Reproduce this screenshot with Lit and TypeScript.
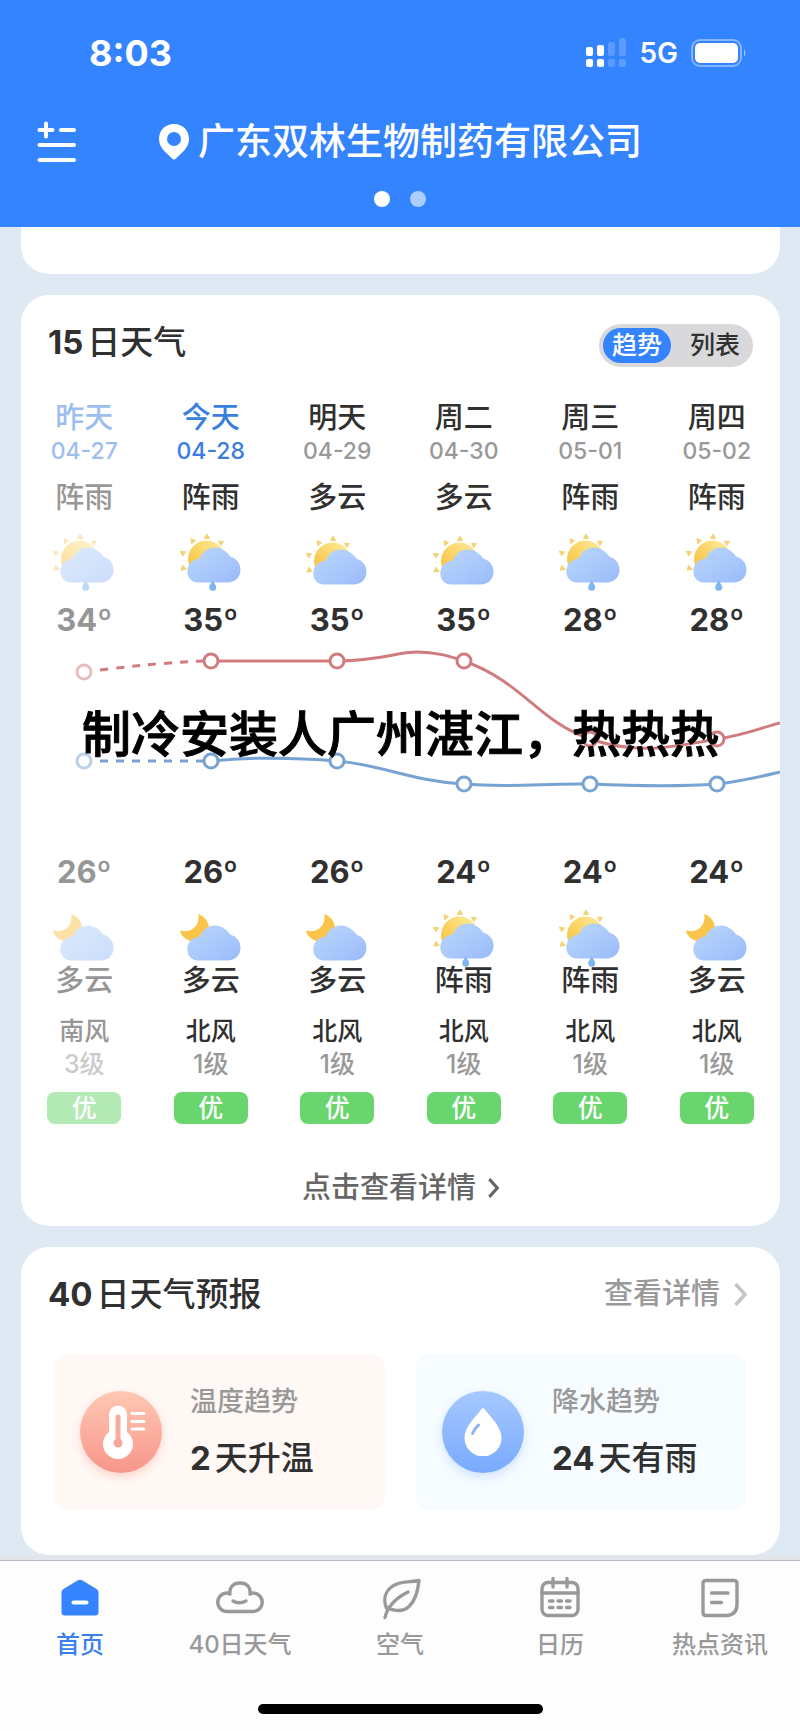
import { LitElement, html, svg, css, nothing } from "lit";
import { customElement, property, state } from "lit/decorators.js";
import { classMap } from "lit/directives/class-map.js";

type Sky = "shower" | "cloudy" | "night-cloudy";

interface Day {
  name: string;
  date: string;
  sky: string;
  icon: Sky;
  high: number;
  low: number;
  nightSky: string;
  nightIcon: Sky;
  wind: string;
  level: number;
  air: string;
  tone?: "past" | "today";
}

const DAYS: Day[] = [
  { name: "昨天", date: "04-27", sky: "阵雨", icon: "shower", high: 34, low: 26, nightSky: "多云", nightIcon: "night-cloudy", wind: "南风", level: 3, air: "优", tone: "past" },
  { name: "今天", date: "04-28", sky: "阵雨", icon: "shower", high: 35, low: 26, nightSky: "多云", nightIcon: "night-cloudy", wind: "北风", level: 1, air: "优", tone: "today" },
  { name: "明天", date: "04-29", sky: "多云", icon: "cloudy", high: 35, low: 26, nightSky: "多云", nightIcon: "night-cloudy", wind: "北风", level: 1, air: "优" },
  { name: "周二", date: "04-30", sky: "多云", icon: "cloudy", high: 35, low: 24, nightSky: "阵雨", nightIcon: "shower", wind: "北风", level: 1, air: "优" },
  { name: "周三", date: "05-01", sky: "阵雨", icon: "shower", high: 28, low: 24, nightSky: "阵雨", nightIcon: "shower", wind: "北风", level: 1, air: "优" },
  { name: "周四", date: "05-02", sky: "阵雨", icon: "shower", high: 28, low: 24, nightSky: "多云", nightIcon: "night-cloudy", wind: "北风", level: 1, air: "优" },
];

@customElement("sky-icon")
export class SkyIcon extends LitElement {
  @property() kind: Sky = "cloudy";

  static styles = css`
    :host { display: block; width: 66px; height: 54px; }
    .art { display: block; width: 66px; height: 54px; overflow: visible; }
  `;

  render() {
    const rain = this.kind === "shower";
    const night = this.kind === "night-cloudy";
    return html`
      <svg class="art" viewBox="0 0 66 54" aria-hidden="true">
        <defs>
          <linearGradient id="sun" x1="0" y1="1" x2="1" y2="0">
            <stop offset="0.1" stop-color="#f8bf3c" />
            <stop offset="0.8" stop-color="#fde488" />
          </linearGradient>
          <linearGradient id="cloud" x1="0" y1="0" x2="1" y2="1">
            <stop offset="0" stop-color="#b9d6fb" />
            <stop offset="0.5" stop-color="#abcafb" />
            <stop offset="1" stop-color="#98bafb" />
          </linearGradient>
        </defs>
        <g transform=${rain ? "translate(0 0)" : "translate(0 2)"}>
          ${night
            ? svg`<path fill="#fac44b" d="M20.3 4C28 6.500 33 15 30.500 23.500C28 31 18 33.500 11 30.500C5.500 28 2.500 24.500 2 20.500C12 24 22.500 16 20.300 4Z" />`
            : svg`
              <circle cx="28.500" cy="27" r="18.500" fill="url(#sun)" />
              <g fill="#f3d377" stroke="#f3d377" stroke-linejoin="round">
                <path d="M29 2L31.600 6.500H26.400Z" />
                <path d="M13 6.500L17.500 8.700L13.700 11.700Z" />
                <path d="M45.500 9.500L40.500 9.200L42.700 13.500Z" />
                <path d="M2.300 19.300L7.500 19.800L4.800 24Z" />
                <path d="M3 38.200L4.800 33.200L8.300 37.300Z" />
              </g>`}
          <path
            fill="url(#cloud)"
            d="M20 50.500H49.500C57 50.500 62.500 45 62.500 38C62.500 31 58.500 26.500 52.500 24.700C48.500 19.500 43.500 15.500 37 15.500C29.500 15.500 25 19.500 21.500 26.500C14 27.500 9.300 32.500 9.300 39.500C9.300 46 14 50.500 20 50.500Z"
          />
          ${rain ? svg`<path fill="#7fb5f2" d="M34.700 48C36 51.500 38.200 52.800 38.200 55.300A3.500 3.500 0 0 1 31.200 55.300C31.200 52.800 33.400 51.500 34.700 48Z" />` : nothing}
        </g>
      </svg>
    `;
  }
}

@customElement("trend-chart")
export class TrendChart extends LitElement {
  static styles = css`
    :host { display: block; position: relative; }
    .plot { display: block; width: 100%; height: auto; }
    .line { fill: none; stroke-width: 3; }
    .hot { stroke: #d07c7e; }
    .cold { stroke: #77a3d3; }
    .dash { stroke-dasharray: 8 8; }
    .dot { fill: #fff; stroke-width: 3; }
    .pale { stroke-opacity: 0.5; }
    .caption {
      position: absolute;
      left: 0;
      right: 0;
      top: 62px;
      margin: 0;
      text-align: center;
      white-space: nowrap;
      font-size: 49px;
      line-height: 70px;
      font-weight: 500;
      color: #000;
      -webkit-text-stroke: 1px #000;
    }
  `;

  render() {
    const xs = [63, 190, 316, 443, 569, 696];
    const hot = [34, 23, 23, 23, 101, 101];
    const cold = [123, 123, 123, 146, 146, 146];
    const dots = (ys: number[], tone: string) =>
      ys.map((y, i) => svg`<circle class="dot ${tone} ${i ? "" : "pale"}" cx=${xs[i]} cy=${y} r="7" />`);
    return html`
      <svg class="plot" viewBox="0 0 759 216" role="img" aria-label="气温趋势">
        <path class="line hot dash" d="M79 32Q135 25 183 23" />
        <path class="line hot" d="M190 23H316C360 23 375 14 396 14C415 14 428 18 443 23C502 44 518 84 569 101C620 118 655 108 696 101C725 97 742 89 759 85" />
        <path class="line cold dash" d="M79 123H183" />
        <path class="line cold" d="M190 123C230 119 280 120 316 123C362 127 390 143 443 146C490 150 525 145 569 146C615 148 655 149 696 146C722 143 742 138 759 134" />
        ${dots(hot, "hot")} ${dots(cold, "cold")}
      </svg>
      <p class="caption">制冷安装人广州湛江，热热热</p>
    `;
  }
}

@customElement("app-root")
export class AppRoot extends LitElement {
  @state() private view = "趋势";
  @state() private tab = "首页";

  static styles = css`
    :host {
      display: flex;
      flex-direction: column;
      min-height: 100vh;
      background: #dfe9f3;
      color: #303030;
      font-family: Inter, "Noto Sans CJK SC", sans-serif;
      font-weight: 500;
    }
    * { box-sizing: border-box; }
    h1, h2, p, ul { margin: 0; padding: 0; font-weight: inherit; list-style: none; }
    button { border: 0; padding: 0; background: none; font: inherit; color: inherit; cursor: pointer; }
    a { color: inherit; text-decoration: none; }
    svg { display: block; flex: none; }

    .top { background: #3483ff; color: #fff; padding-bottom: 8px; }
    .status { display: flex; align-items: center; height: 106px; padding: 0 53px 0 89px; gap: 13px; }
    .clock { margin-right: auto; font-size: 36px; font-weight: 700; }
    .network { font-size: 28px; font-weight: 600; }
    .place { display: grid; grid-template-columns: 1fr auto 1fr; align-items: center; height: 72px; padding: 0 37px; }
    .where { display: flex; align-items: center; gap: 8px; font-size: 37px; line-height: 48px; }
    .menu { justify-self: start; }
    .pager { display: flex; justify-content: center; align-items: center; gap: 20px; height: 41px; }
    .page { width: 16px; height: 16px; border-radius: 50%; background: #aeceff; }
    .page.on { background: #fff; }

    .feed { flex: 1; display: flex; flex-direction: column; gap: 21px; padding: 0 20px 5px 21px; }
    .card { background: #fff; border-radius: 28px; overflow: hidden; }
    .stub { height: 47px; border-radius: 0 0 28px 28px; }
    .head { display: flex; justify-content: space-between; align-items: flex-start; padding: 29px 27px 0; }
    .title { font-size: 33px; line-height: 36px; }
    .title b, .amount b { font-weight: 700; margin-right: 4px; }

    .switch { display: flex; padding: 4px; border-radius: 22px; background: #d9d9db; font-size: 25px; line-height: 35px; }
    .choice { padding: 0 9px; border-radius: 18px; }
    .choice + .choice { margin-left: 10px; }
    .choice.on { background: #3483ff; color: #fff; }

    .days { display: grid; grid-template-columns: repeat(6, 1fr); }
    .upper { margin-top: 33px; }
    .day { display: flex; flex-direction: column; align-items: center; font-size: 29px; line-height: 36px; }
    .date { font-size: 23px; line-height: 30px; color: #999; margin-bottom: 14px; }
    .today .name, .today .date, .past .name, .past .date { color: #3a7ee0; }
    .past { opacity: 0.5; }
    .upper .icon { margin: 16px 0; }
    .lower .icon { margin: 18px 0 1px; }
    .temp { font-size: 31px; font-weight: 700; }
    .wind { margin-top: 16px; font-size: 25px; line-height: 33px; }
    .level { font-size: 25px; line-height: 33px; color: #999; }
    .air { margin-top: 11px; width: 74px; border-radius: 8px; background: #68d56d; color: #fff; text-align: center; font-size: 25px; line-height: 32px; }
    .more { display: flex; justify-content: center; align-items: center; gap: 12px; margin-top: 46px; padding-bottom: 20px; font-size: 29px; line-height: 36px; color: #666; }
    .detail { display: flex; align-items: center; gap: 14px; padding-right: 6px; font-size: 29px; line-height: 36px; color: #999; }

    .panels { display: grid; grid-template-columns: 1fr 1fr; gap: 31px; padding: 42px 33px 45px; }
    .panel { display: flex; align-items: center; gap: 28px; height: 156px; padding: 0 26px; border-radius: 14px; }
    .warm { background: #fff8f5; }
    .wet { background: #f6fcff; }
    .disc { display: grid; place-items: center; width: 82px; height: 82px; border-radius: 50%; }
    .warm .disc { background: linear-gradient(#fec8b2, #f8958b); box-shadow: 0 4px 10px #fcd5cb; }
    .wet .disc { background: linear-gradient(#a6c8fe, #79aafe); box-shadow: 0 4px 10px #cfe2ff; }
    .facts { padding-bottom: 4px; }
    .label { font-size: 27px; line-height: 36px; color: #999; }
    .amount { margin-top: 20px; font-size: 33px; line-height: 36px; white-space: nowrap; }

    .bar { border-top: 1px solid #b4bac8; background: #fdfdfe; padding: 16px 0 17px; box-shadow: 0 -4px 1px #e1e4e8; }
    .tabs { display: grid; grid-template-columns: repeat(5, 1fr); }
    .tab { display: flex; flex-direction: column; align-items: center; gap: 12px; font-size: 24px; line-height: 32px; color: #999; white-space: nowrap; }
    .tab.on { color: #3a80ec; }
    .handle { width: 285px; height: 10px; margin: 43px auto 0; border-radius: 5px; background: #000; }
  `;

  private tabIcon(name: string) {
    switch (name) {
      case "首页":
        return svg`<path fill="#3483ff" d="M17.500 3.500Q20 2 22.500 3.500L36.500 12Q38.500 13.300 38.500 15.500V35Q38.500 38.500 35 38.500H5Q1.500 38.500 1.500 35V15.500Q1.500 13.300 3.500 12Z" /><path d="M13.500 25.500H26.500" stroke="#fff" stroke-width="4" />`;
      case "40日天气":
        return svg`<path d="M7 34.500H33A9.250 9.250 0 0 0 33 16Q31.500 16 30 17C31 10 26.500 6 20 6C13.500 6 9 10 10 17Q8.500 16 7 16A9.250 9.250 0 0 0 7 34.500Z" /><path d="M13 24Q19 27.500 26 24" />`;
      case "空气":
        return svg`<path d="M39 3.500C30 5.500 20 3.500 12 9.500C4 15.500 3.500 24 6.500 31C14 33 22 36 29 29.500C36 23 38 13 39 3.500Z" /><path d="M28 15C18 20 8 27 5 40.500" />`;
      case "日历":
        return svg`<rect x="2" y="5.500" width="36" height="33" rx="6" /><path d="M2 16H38M13 1.500V10M27 1.500V10M9.500 24H13M18 24H21.500M26.500 24H30M9.500 30.500H13M18 30.500H21.500M26.500 30.500H30" />`;
      default:
        return svg`<path d="M6 3.500H34Q37 3.500 37 6.500V27Q37 38.500 26 38.500H6Q3 38.500 3 35.500V6.500Q3 3.500 6 3.500Z" /><path d="M11.500 16H28M11.500 25.500H21.500" />`;
    }
  }

  private chevron(h: number, w: number, color: string) {
    return html`<svg width=${w} height=${h} viewBox="0 0 13 23" fill="none" stroke=${color} stroke-width="3.6" aria-hidden="true"><path d="M1.500 1L11 11.500L1.500 22" /></svg>`;
  }

  render() {
    return html`
      <header class="top">
        <div class="status">
          <time class="clock">8:03</time>
          <svg width="40" height="30" viewBox="0 0 40 30" fill="#fff" aria-hidden="true">
            <rect x="0" y="9" width="7" height="9" rx="2" /><rect x="0" y="21" width="7" height="8" rx="2" />
            <rect x="11" y="7" width="7" height="11" rx="2" /><rect x="11" y="21" width="7" height="8" rx="2" />
            <g fill-opacity="0.2">
              <rect x="22" y="4" width="7" height="14" rx="2" /><rect x="22" y="21" width="7" height="8" rx="2" />
              <rect x="33" y="0" width="7" height="18" rx="2" /><rect x="33" y="21" width="7" height="8" rx="2" />
            </g>
          </svg>
          <span class="network">5G</span>
          <svg width="56" height="28" viewBox="0 0 56 28" aria-hidden="true">
            <rect x="1" y="1" width="49" height="26" rx="8" fill="none" stroke="#fff" stroke-opacity="0.4" stroke-width="2" />
            <rect x="4" y="4" width="43" height="20" rx="5" fill="#fff" />
            <path d="M53 10Q56 14 53 18Z" fill="#fff" fill-opacity="0.5" />
          </svg>
        </div>
        <div class="place">
          <button class="menu" aria-label="城市管理">
            <svg width="40" height="42" viewBox="0 0 40 42" fill="none" stroke="#fff" stroke-width="4" stroke-linecap="round">
              <path d="M2.500 9H15.500M9 2.500V15.500M24 9H37M2.500 24H37M2.500 39H37" />
            </svg>
          </button>
          <h1 class="where">
            <svg width="32" height="36" viewBox="0 0 32 36" aria-hidden="true">
              <path fill="#fff" fill-rule="evenodd" d="M16 0C7 0 1 6.500 1 15C1 24 9 29.500 14 34.500Q16 36.500 18 34.500C23 29.500 31 24 31 15C31 6.500 25 0 16 0ZM16 8A7 7 0 1 1 16 22A7 7 0 1 1 16 8Z" />
            </svg>
            广东双林生物制药有限公司
          </h1>
        </div>
        <div class="pager"><i class="page on"></i><i class="page"></i></div>
      </header>

      <main class="feed">
        <div class="card stub"></div>

        <section class="card">
          <div class="head">
            <h2 class="title"><b>15</b>日天气</h2>
            <div class="switch">
              ${["趋势", "列表"].map(
                (v) => html`<button class=${classMap({ choice: true, on: v === this.view })} @click=${() => (this.view = v)}>${v}</button>`
              )}
            </div>
          </div>
          <ul class="days upper">
            ${DAYS.map(
              (d) => html`<li class="day ${d.tone ?? ""}">
                <span class="name">${d.name}</span>
                <span class="date">${d.date}</span>
                <span>${d.sky}</span>
                <sky-icon class="icon" kind=${d.icon}></sky-icon>
                <span class="temp">${d.high}º</span>
              </li>`
            )}
          </ul>
          <trend-chart></trend-chart>
          <ul class="days lower">
            ${DAYS.map(
              (d) => html`<li class="day ${d.tone ?? ""}">
                <span class="temp">${d.low}º</span>
                <sky-icon class="icon" kind=${d.nightIcon}></sky-icon>
                <span>${d.nightSky}</span>
                <span class="wind">${d.wind}</span>
                <span class="level">${d.level}级</span>
                <span class="air">${d.air}</span>
              </li>`
            )}
          </ul>
          <a class="more" href="#detail">点击查看详情 ${this.chevron(20, 11, "#666")}</a>
        </section>

        <section class="card">
          <div class="head">
            <h2 class="title"><b>40</b>日天气预报</h2>
            <a class="detail" href="#forecast">查看详情 ${this.chevron(23, 13, "#c4c4c4")}</a>
          </div>
          <div class="panels">
            <div class="panel warm">
              <div class="disc">
                <svg width="42" height="54" viewBox="-3 0 42 54" overflow="visible" fill="none" aria-hidden="true">
                  <path fill="#fff" d="M6 9.500A9 9 0 0 1 24 9.500V27A15 15 0 1 1 6 27Z" />
                  <path d="M15 12V36" stroke="#f9ab9c" stroke-width="5" stroke-linecap="round" />
                  <circle cx="15" cy="38" r="4.500" fill="#f9a79a" />
                  <path d="M29 8.500H41M29 16.500H41M29 24H41" stroke="#fff" stroke-width="3" stroke-linecap="round" />
                </svg>
              </div>
              <div class="facts">
                <p class="label">温度趋势</p>
                <p class="amount"><b>2</b>天升温</p>
              </div>
            </div>
            <div class="panel wet">
              <div class="disc">
                <svg width="38" height="48" viewBox="0 0 38 48" fill="none" aria-hidden="true">
                  <path fill="#fff" d="M17.500 1Q19 -1 20.500 1C26 9 37.500 18 37.500 30A18.500 18.500 0 0 1 0.500 30C0.500 18 12 9 17.500 1Z" />
                  <path d="M8.500 25.500Q11 20 14.500 17" stroke="#8fb5f2" stroke-width="3" stroke-linecap="round" />
                </svg>
              </div>
              <div class="facts">
                <p class="label">降水趋势</p>
                <p class="amount"><b>24</b>天有雨</p>
              </div>
            </div>
          </div>
        </section>
      </main>

      <footer class="bar">
        <nav class="tabs">
          ${["首页", "40日天气", "空气", "日历", "热点资讯"].map(
            (t) => html`<button class=${classMap({ tab: true, on: t === this.tab })} @click=${() => (this.tab = t)}>
              <svg width="40" height="40" viewBox="0 0 40 40" overflow="visible" fill="none" stroke=${t === "首页" ? "none" : "#999"} stroke-width="3.4" stroke-linecap="round" stroke-linejoin="round" aria-hidden="true">
                ${this.tabIcon(t)}
              </svg>
              <span>${t}</span>
            </button>`
          )}
        </nav>
        <div class="handle"></div>
      </footer>
    `;
  }
}
